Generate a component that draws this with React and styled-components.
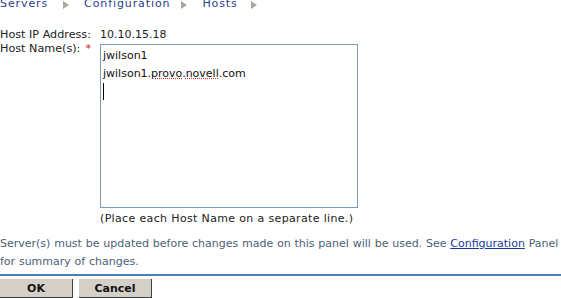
import React from 'react';
import styled, { createGlobalStyle } from 'styled-components';

const GlobalStyle = createGlobalStyle`
  html, body {
    margin: 0;
    padding: 0;
    background: #fff;
  }
  body {
    font-family: "DejaVu Sans", Verdana, sans-serif;
    font-size: 11px;
    color: #222;
  }
`;

const Page = styled.div`
  width: 561px;
  height: 298px;
  overflow: hidden;
  display: flex;
  flex-direction: column;
`;

const Crumbs = styled.div`
  display: flex;
  align-items: center;
  height: 14px;
  margin-top: -4px;
  color: #1f3f8f;
  letter-spacing: 0.9px;
  font-size: 11px;
`;

const Crumb = styled.span`
  margin-right: ${({ gap }) => gap}px;
`;

const Arrow = styled.span`
  width: 0;
  height: 0;
  margin-top: 3px;
  border-top: 4px solid transparent;
  border-bottom: 4px solid transparent;
  border-left: 6px solid #a8a8a0;
  margin-right: ${({ gap }) => gap}px;
`;

const Form = styled.div`
  display: grid;
  grid-template-columns: 100px auto;
  margin-top: 18px;
`;

const Label = styled.div`
  line-height: 14px;
  white-space: nowrap;
  font-size: 11.2px;
`;

const Required = styled.span`
  color: #d02020;
  margin-left: 5px;
`;

const Value = styled.div`
  line-height: 14px;
`;

const Field = styled.div`
  display: flex;
  flex-direction: column;
  margin-top: 2px;
`;

const Area = styled.div`
  width: 252px;
  height: 160px;
  border: 1px solid #7b9bbb;
  padding: 2px 2px 0;
  box-sizing: content-box;
  line-height: 18px;
  color: #111;
`;

const Cursor = styled.span`
  display: inline-block;
  width: 1px;
  height: 17px;
  background: #000;
  vertical-align: top;
`;

const Spell = styled.span`
  text-decoration: underline dotted #d03030;
`;

const Hint = styled.div`
  margin-top: 3px;
  line-height: 16px;
  letter-spacing: 0.35px;
`;

const Note = styled.p`
  margin: 8px 0 0;
  color: #4a6078;
  word-spacing: 0.3px;
  line-height: 18px;
`;

const Link = styled.a`
  color: #1a3aa0;
  text-decoration: underline;
`;

const Rule = styled.div`
  height: 2px;
  flex-shrink: 0;
  background: #4a80b4;
  margin-top: 3px;
`;

const Buttons = styled.div`
  display: flex;
  gap: 6px;
  margin-top: 3px;
`;

const Button = styled.button`
  width: 73px;
  height: 19px;
  padding: 0;
  background: #d4d0c8;
  border: none;
  border-right: 1px solid #404040;
  border-bottom: 1px solid #404040;
  font-family: "DejaVu Sans", Verdana, sans-serif;
  font-size: 11px;
  font-weight: bold;
  color: #111;
`;

export default function App() {
  return (
    <Page>
      <GlobalStyle />
      <Crumbs>
        <Crumb gap={15}>Servers</Crumb>
        <Arrow gap={15} />
        <Crumb gap={11}>Configuration</Crumb>
        <Arrow gap={15} />
        <Crumb gap={13}>Hosts</Crumb>
        <Arrow gap={0} />
      </Crumbs>
      <Form>
        <Label>Host IP Address:</Label>
        <Value>10.10.15.18</Value>
        <Label>
          Host Name(s):<Required>*</Required>
        </Label>
        <Field>
          <Area>
            <div>jwilson1</div>
            <div>
              jwilson1.<Spell>provo</Spell>.<Spell>novell</Spell>.com
            </div>
            <div>
              <Cursor />
            </div>
          </Area>
          <Hint>(Place each Host Name on a separate line.)</Hint>
        </Field>
      </Form>
      <Note>
        Server(s) must be updated before changes made on this panel will be used. See{' '}
        <Link href="#">Configuration</Link> Panel for summary of changes.
      </Note>
      <Rule />
      <Buttons>
        <Button>OK</Button>
        <Button>Cancel</Button>
      </Buttons>
    </Page>
  );
}
